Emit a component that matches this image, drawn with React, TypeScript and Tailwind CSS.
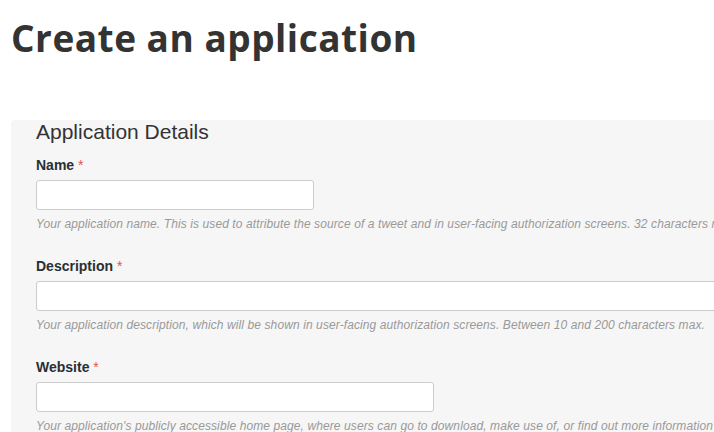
const fields = [
  {
    label: 'Name',
    width: 'w-[278px]',
    help: 'Your application name. This is used to attribute the source of a tweet and in user-facing authorization screens. 32 characters max.',
  },
  {
    label: 'Description',
    width: 'w-full',
    help: 'Your application description, which will be shown in user-facing authorization screens. Between 10 and 200 characters max.',
  },
  {
    label: 'Website',
    width: 'w-[398px]',
    help: "Your application's publicly accessible home page, where users can go to download, make use of, or find out more information about your application.",
  },
]

export default function App() {
  return (
    <main className="h-[432px] w-[714px] overflow-hidden bg-white">
      <h1 className="pl-[11px] pt-[19px] font-['Open_Sans',sans-serif] text-[37px] font-bold leading-[38px] tracking-[0.5px] text-[#333333]">
        Create an application
      </h1>

      <section className="ml-[11px] mt-[63px] w-[800px] rounded-tl-[4px] bg-[#f6f6f6] px-[25px] pb-6 font-['Liberation_Sans',Arial,sans-serif]">
        <h2 className="whitespace-nowrap text-[21px] leading-[24px] text-[#333333]">Application Details</h2>

        <div className="mt-[11px] flex flex-col gap-[23px]">
          {fields.map((f) => (
            <div key={f.label} className="flex flex-col">
              <label className="text-[14px] font-bold leading-[20px] text-[#292f33]">
                {f.label} <span className="font-normal text-[#e8505b]">*</span>
              </label>
              <input
                type="text"
                className={`mt-[5px] h-[30px] ${f.width} rounded-[3px] border border-[#cccccc] bg-white px-2 outline-none`}
              />
              <p className="mt-[6px] whitespace-nowrap text-[12px] italic leading-[17px] tracking-[0.1px] text-[#999999]">
                {f.help}
              </p>
            </div>
          ))}
        </div>
      </section>
    </main>
  )
}
